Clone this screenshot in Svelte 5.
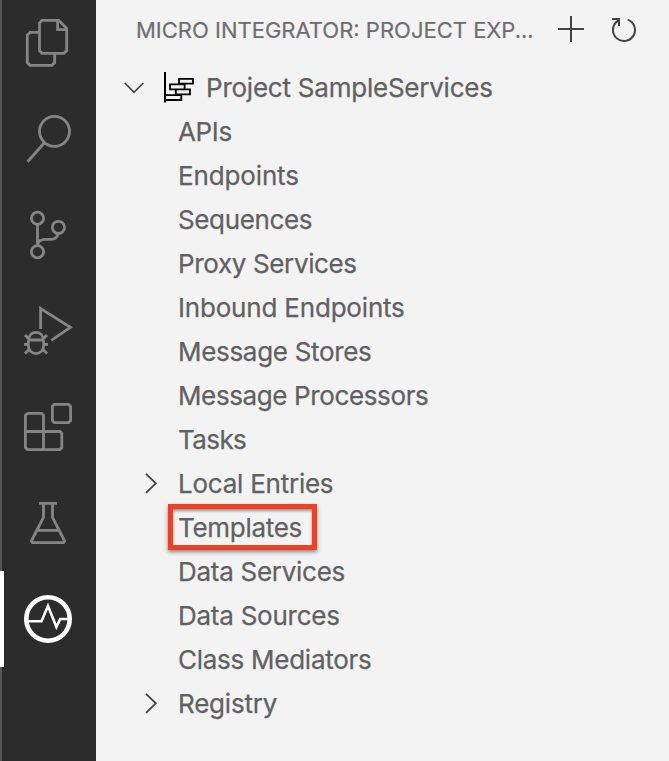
<script>
  const project = 'Project SampleServices';
  const items = [
    { label: 'APIs', tracking: -0.37 },
    { label: 'Endpoints', tracking: -0.14 },
    { label: 'Sequences', tracking: -0.37 },
    { label: 'Proxy Services', tracking: -0.36 },
    { label: 'Inbound Endpoints', tracking: -0.19 },
    { label: 'Message Stores', tracking: -0.31 },
    { label: 'Message Processors', tracking: -0.38 },
    { label: 'Tasks', tracking: -0.6 },
    { label: 'Local Entries', tracking: -0.24, branch: true },
    { label: 'Templates', tracking: -0.3, marked: true },
    { label: 'Data Services', tracking: -0.28 },
    { label: 'Data Sources', tracking: -0.25 },
    { label: 'Class Mediators', tracking: -0.26 },
    { label: 'Registry', tracking: -0.2, branch: true }
  ];
</script>

<div class="window">
  <nav class="activity">
    <button aria-label="Explorer">
      <svg viewBox="0 -5 96 96"><path d="M39.5 32.3H30L27.3 35V62.6L30 65.3H52L54.7 62.6V54M42 20.3H58.7L66.7 28.3V50.6L64 53.3H42L39.5 50.6V23ZM57.6 20.5V29.6H66.5" /></svg>
    </button>
    <button aria-label="Search">
      <svg viewBox="0 91 96 96"><circle cx="54.5" cy="131.3" r="15" /><path d="M44.2 143L27.6 161.7" /></svg>
    </button>
    <button aria-label="Source control">
      <svg viewBox="0 187 96 96"><circle cx="37.5" cy="218.3" r="6.1" /><circle cx="58.4" cy="227.4" r="6.1" /><circle cx="37.5" cy="251.7" r="6.1" /><path d="M37.5 224.5V245.5M58.3 233.5C57.3 237.5 55 239.3 51 239.3H45C41 239.3 38.5 241 37.5 244.5" /></svg>
    </button>
    <button aria-label="Run and debug">
      <svg viewBox="0 283 96 96"><path d="M40.6 329V308.5L70.4 327.3L51.3 340.3" /><path d="M28.3 342C28.3 336 31.5 332.4 36 332.4S43.7 336 43.7 342V345C43.7 350 40.5 353.6 36 353.6S28.3 350 28.3 345ZM28.5 340H43.5M25 335L29 339M47 335L43 339M24 344.4H28M44 344.4H48M25 353.6L29.5 349M47 353.6L42.5 349" /></svg>
    </button>
    <button aria-label="Extensions">
      <svg viewBox="0 379 96 96"><path d="M27.3 413.3H41.5L43.5 415.3V449.6M25.4 431.5H60L61.8 433.3V447.6L59.8 449.6H27.4L25.4 447.6V415.3L27.4 413.3" /><path d="M54.3 404.4H68.6L70.6 406.4V420.6L68.6 422.6H54.3L52.4 420.6V406.4Z" /></svg>
    </button>
    <button aria-label="Testing">
      <svg viewBox="0 475 96 96"><path d="M39 503.4H57M43.5 503.4V517.4L31.4 541L32.5 542.7H63.5L64.6 541L52.5 517.4V503.4M37 530.4H59" /></svg>
    </button>
    <button class="active" aria-label="Micro Integrator">
      <svg viewBox="0 571 96 96"><circle cx="48" cy="619" r="21.7" stroke-width="4.6" /><path d="M27.5 621.3H41.5L48 606L56.4 627L60.2 619H68.5" stroke-width="2.6" /></svg>
    </button>
  </nav>

  <main>
    <header>
      <h1>MICRO INTEGRATOR: PROJECT EXP...</h1>
      <svg class="add" viewBox="556 14 30 30"><path d="M558 29H584M571 16V42" /></svg>
      <svg class="refresh" viewBox="609 15 30 30"><path d="M627.6 19.6A11 11 0 1 1 617.5 21.1L619 20M612 19H619V26" /></svg>
    </header>

    <div class="row root">
      <svg class="down" viewBox="123 77 22 22"><path d="M124.8 83L134 92.3L143.3 83" /></svg>
      <svg class="chart" viewBox="162 70 34 34"><path d="M165 71V101.5" stroke-width="2" /><path d="M179 77.8H193V82.7H179ZM170 83.3H184.6V88.3H170ZM175.8 88.3H190V93.3H175.8ZM165 94.2H181.3V99H165Z" stroke-width="1.8" /></svg>
      <span>{project}</span>
    </div>
    {#each items as item}
      <div class="row">
        <div class="twist">
          {#if item.branch}
            <svg class="right" viewBox="144 472 14 22"><path d="M146 473.8L155.8 483.3L146 492.8" /></svg>
          {/if}
        </div>
        <span class:marked={item.marked} style="letter-spacing: {item.tracking}px">{item.label}</span>
      </div>
    {/each}
  </main>
</div>

<style>
  .window {
    display: flex;
    width: 669px;
    height: 761px;
    overflow: hidden;
    background: #f3f3f3;
    font-family: Inter, "Liberation Sans", sans-serif;
  }
  svg {
    display: block;
    fill: none;
    flex: none;
  }
  .activity {
    flex: none;
    box-sizing: border-box;
    width: 96px;
    height: 766px;
    margin-top: -5px;
    background: linear-gradient(90deg, #575757 2px, #2c2c2c 2px);
  }
  button {
    display: block;
    width: 96px;
    height: 96px;
    padding: 0;
    border: 0;
    background: none;
    color: #858585;
  }
  .active {
    color: #fff;
    background: linear-gradient(90deg, #fff 4px, transparent 4px);
  }
  .activity svg {
    width: 96px;
    height: 96px;
    stroke: currentColor;
    stroke-width: 2.8;
  }
  main {
    flex: 1;
    min-width: 0;
  }
  header {
    display: flex;
    align-items: center;
    height: 60px;
    margin-bottom: 6px;
    padding-left: 40px;
  }
  h1 {
    flex: none;
    width: 420px;
    margin: 0;
    font-size: 22px;
    font-weight: 400;
    white-space: nowrap;
    color: #6f6f6f;
    -webkit-text-stroke: 0.2px #6f6f6f;
  }
  header svg {
    width: 30px;
    height: 30px;
    stroke: #424242;
    stroke-width: 2;
  }
  .add {
    margin-top: -2px;
  }
  .refresh {
    margin-left: 23px;
  }
  .row {
    display: flex;
    align-items: center;
    height: 44px;
    font-size: 26px;
    line-height: 44px;
    color: #616161;
    white-space: nowrap;
    -webkit-text-stroke: 0.25px #616161;
  }
  .root {
    letter-spacing: -0.23px;
  }
  .down {
    width: 22px;
    height: 22px;
    margin-left: 27px;
    stroke: #424242;
    stroke-width: 1.7;
  }
  .chart {
    width: 34px;
    height: 34px;
    margin: 0 10px 0 17px;
    stroke: #000;
  }
  .twist {
    width: 34px;
    padding-left: 48px;
  }
  .right {
    width: 14px;
    height: 22px;
    margin-bottom: 2px;
    stroke: #424242;
    stroke-width: 1.8;
  }
  .marked {
    box-sizing: border-box;
    width: 149px;
    height: 46px;
    margin: -2px 0 0 -10px;
    padding: 1px 0 0 5px;
    border: 5px solid #ee4023;
    line-height: 36px;
    box-shadow: 0 2px 4px rgba(0, 0, 0, 0.45), inset 0 2px 3px rgba(0, 0, 0, 0.4);
  }
</style>
